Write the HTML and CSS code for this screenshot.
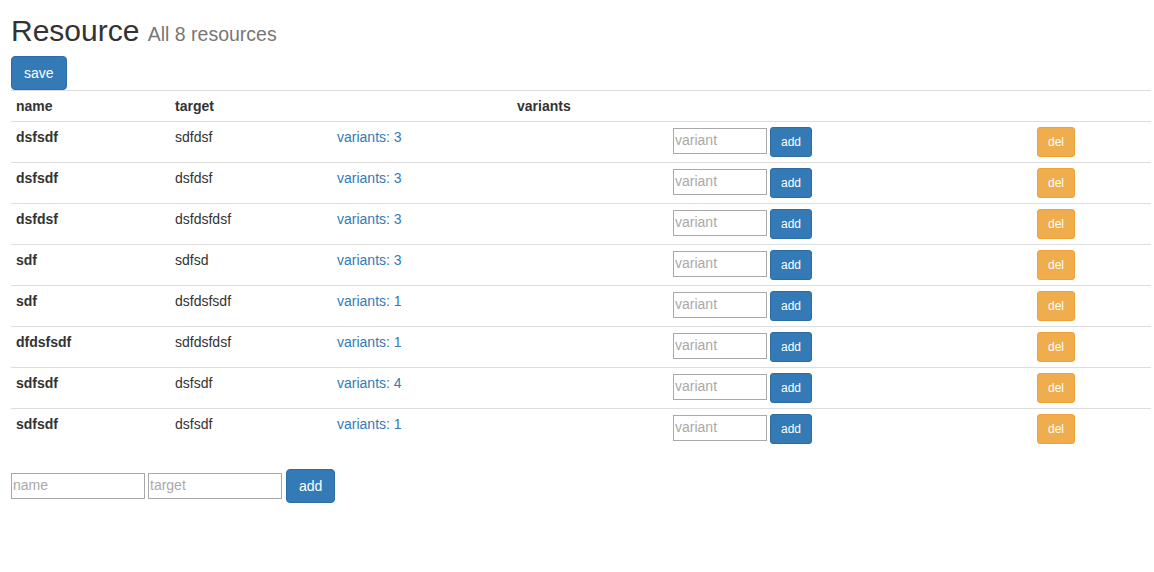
FILE: index.html
```html
<!DOCTYPE html>
<html lang="en">
<head>
    <meta charset="UTF-8">
    <title>Resource</title>
    <link rel="stylesheet" href="styles.css">
</head>
<body>

    <div class="page">
        <h2>Resource <small>All 8 resources</small></h2>
        <button class="btn btn-primary">save</button>

        <table class="table">
            <colgroup>
                <col class="c-name">
                <col class="c-target">
                <col class="c-link">
                <col class="c-variant">
                <col class="c-del">
            </colgroup>
            <thead>
                <tr>
                    <th>name</th>
                    <th>target</th>
                    <th colspan="3" class="th-variants">variants</th>
                </tr>
            </thead>
            <tbody id="rows"></tbody>
        </table>

        <form class="new-form" onsubmit="return false">
            <input type="text" placeholder="name">
            <input type="text" placeholder="target">
            <button class="btn btn-primary">add</button>
        </form>
    </div>

    <script>
        const resources = [
            { name: 'dsfsdf', target: 'sdfdsf', variants: 3 },
            { name: 'dsfsdf', target: 'dsfdsf', variants: 3 },
            { name: 'dsfdsf', target: 'dsfdsfdsf', variants: 3 },
            { name: 'sdf', target: 'sdfsd', variants: 3 },
            { name: 'sdf', target: 'dsfdsfsdf', variants: 1 },
            { name: 'dfdsfsdf', target: 'sdfdsfdsf', variants: 1 },
            { name: 'sdfsdf', target: 'dsfsdf', variants: 4 },
            { name: 'sdfsdf', target: 'dsfsdf', variants: 1 }
        ];

        const rows = document.getElementById('rows');
        resources.forEach(r => {
            rows.innerHTML += `
                <tr>
                    <th>${r.name}</th>
                    <td>${r.target}</td>
                    <td><a href="#">variants: ${r.variants}</a></td>
                    <td>
                        <div class="variant-form">
                            <input type="text" placeholder="variant">
                            <button class="btn btn-primary btn-sm">add</button>
                        </div>
                    </td>
                    <td><button class="btn btn-warning btn-sm">del</button></td>
                </tr>
            `;
        });
    </script>

</body>
</html>
```

FILE: styles.css
```css
/* General */
body { margin: 0; font-family: "Liberation Sans", Arial, sans-serif; font-size: 14px; line-height: 1.42857; color: #333; background: #fff; }
a { color: #337ab7; text-decoration: none; }
.page { padding: 0 0 0 11px; width: 1140px; }

/* Heading */
h2 { font-size: 30px; font-weight: 500; line-height: 1.1; margin: 14px 0 9px; }
h2 small { font-size: 65%; font-weight: 400; color: #777; }

/* Buttons */
.btn { display: inline-block; font-family: inherit; font-size: 14px; line-height: 20px; padding: 6px 12px;
       border: 1px solid transparent; border-radius: 4px; color: #fff; cursor: pointer; vertical-align: middle; }
.btn-primary { background: #337ab7; border-color: #2e6da4; }
.btn-warning { background: #f0ad4e; border-color: #eea236; }
.btn-sm { font-size: 12px; line-height: 18px; padding: 5px 10px; border-radius: 3px; }

/* Table */
.table { width: 1140px; border-collapse: collapse; table-layout: fixed; margin-bottom: 20px; }
.c-name { width: 159px; }
.c-target { width: 162px; }
.c-link { width: 336px; }
.c-variant { width: 364px; }
.c-del { width: 119px; }
.table th, .table td { padding: 5px; text-align: left; vertical-align: top; border-top: 1px solid #ddd; line-height: 20px; }
.table thead th { font-weight: bold; }
.th-variants { padding-left: 185px !important; }

/* Inputs */
input { font-family: inherit; font-size: 14px; height: 26px; box-sizing: border-box; padding: 0 1px 2px;
        border: 1px solid #a9a9a9; margin: 0; color: #333; }
input::placeholder { color: #a9a9a9; }
.variant-form { display: flex; align-items: flex-start; gap: 3px; }
.variant-form input { width: 94px; margin-top: 1px; }

/* New resource form */
.new-form { display: flex; align-items: center; gap: 3px; }
.new-form input { width: 134px; }
.new-form .btn { margin-left: 1px; }
```
